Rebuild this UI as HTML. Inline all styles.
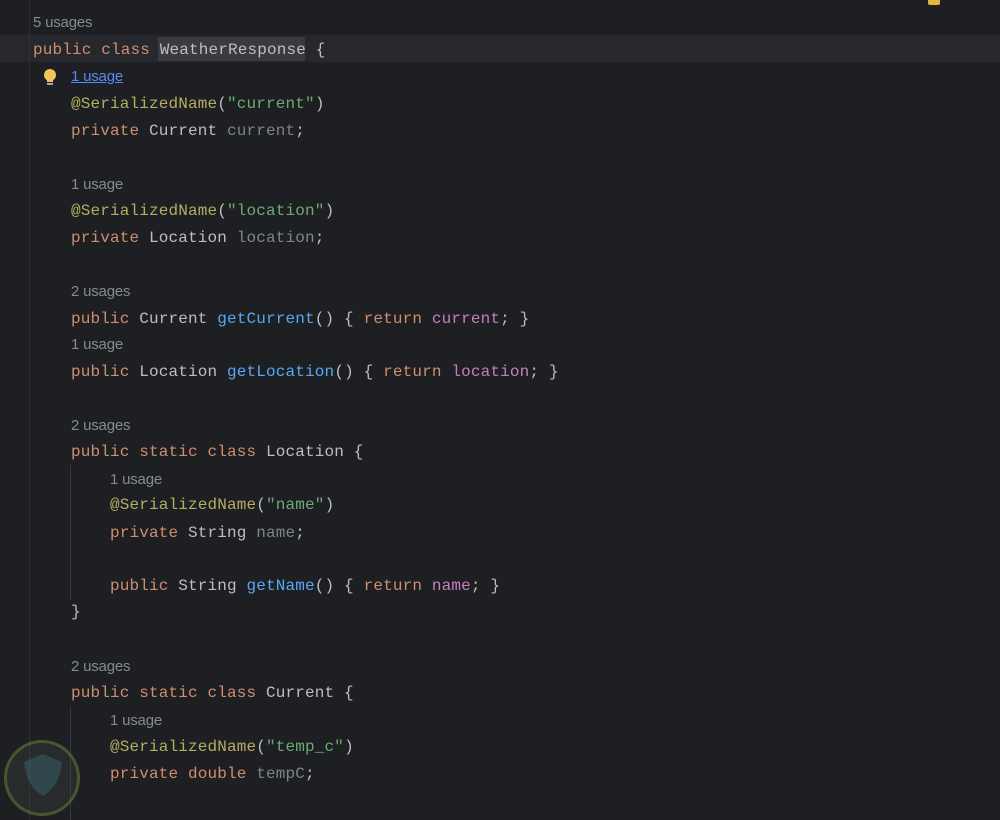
<!DOCTYPE html><html><head><style>
body{margin:0;width:1000px;height:820px;background:#1e1f22;overflow:hidden;position:relative;font-family:"Liberation Mono",monospace;}
.l{position:absolute;font-size:16px;line-height:20px;color:#bcbec4;white-space:pre;letter-spacing:0.15px;}
.u{position:absolute;font-family:"Liberation Sans",sans-serif;font-size:15px;line-height:18px;color:#868a91;white-space:pre;letter-spacing:-0.2px}
.k{color:#cf8e6d}.a{color:#b3ae60}.s{color:#6aab73}.f{color:#c77dbb}.m{color:#56a8f5}.g{color:#7f838a}
</style></head><body>
<div style="position:absolute;left:0;top:35px;width:1000px;height:27px;background:#26282e"></div>
<div style="position:absolute;left:29px;top:0;width:1px;height:820px;background:#2f3136"></div>
<div style="position:absolute;left:70px;top:465px;width:1px;height:135px;background:#35373c"></div>
<div style="position:absolute;left:70px;top:706px;width:1px;height:114px;background:#35373c"></div>
<div style="position:absolute;left:158px;top:37px;width:147px;height:24px;background:#393b40"></div>
<div style="position:absolute;left:928px;top:0;width:12px;height:5px;background:#e0b840;border-radius:0 0 2px 2px"></div>
<svg style="position:absolute;left:42px;top:68px" width="16" height="20"><circle cx="8" cy="7" r="6" fill="#f2c55c"/><rect x="5" y="12" width="6" height="2" fill="#f2c55c"/><rect x="5" y="15" width="6" height="2" fill="#aaa"/></svg>
<div class="u" style="left:33px;top:14px">5 usages</div>
<div class="l" style="left:33px;top:40px"><span class="k">public class </span>WeatherResponse {</div>
<div class="u" style="left:71px;top:68px;color:#548af7;text-decoration:underline">1 usage</div>
<div class="l" style="left:71px;top:94px"><span class="a">@SerializedName</span>(<span class="s">"current"</span>)</div>
<div class="l" style="left:71px;top:121px"><span class="k">private </span>Current <span class="g">current</span>;</div>
<div class="u" style="left:71px;top:176px">1 usage</div>
<div class="l" style="left:71px;top:201px"><span class="a">@SerializedName</span>(<span class="s">"location"</span>)</div>
<div class="l" style="left:71px;top:228px"><span class="k">private </span>Location <span class="g">location</span>;</div>
<div class="u" style="left:71px;top:283px">2 usages</div>
<div class="l" style="left:71px;top:309px"><span class="k">public </span>Current <span class="m">getCurrent</span>() { <span class="k">return </span><span class="f">current</span>; }</div>
<div class="u" style="left:71px;top:336px">1 usage</div>
<div class="l" style="left:71px;top:362px"><span class="k">public </span>Location <span class="m">getLocation</span>() { <span class="k">return </span><span class="f">location</span>; }</div>
<div class="u" style="left:71px;top:417px">2 usages</div>
<div class="l" style="left:71px;top:442px"><span class="k">public static class </span>Location {</div>
<div class="u" style="left:110px;top:471px">1 usage</div>
<div class="l" style="left:110px;top:495px"><span class="a">@SerializedName</span>(<span class="s">"name"</span>)</div>
<div class="l" style="left:110px;top:523px"><span class="k">private </span>String <span class="g">name</span>;</div>
<div class="l" style="left:110px;top:576px"><span class="k">public </span>String <span class="m">getName</span>() { <span class="k">return </span><span class="f">name</span>; }</div>
<div class="l" style="left:71px;top:602px">}</div>
<div class="u" style="left:71px;top:658px">2 usages</div>
<div class="l" style="left:71px;top:683px"><span class="k">public static class </span>Current {</div>
<div class="u" style="left:110px;top:712px">1 usage</div>
<div class="l" style="left:110px;top:737px"><span class="a">@SerializedName</span>(<span class="s">"temp_c"</span>)</div>
<div class="l" style="left:110px;top:764px"><span class="k">private double </span><span class="g">tempC</span>;</div>
<div style="position:absolute;left:4px;top:740px;width:76px;height:76px;border-radius:50%;border:3px solid rgba(110,140,60,0.45);box-sizing:border-box;background:rgba(70,80,70,0.25)"></div>
<svg style="position:absolute;left:22px;top:752px;opacity:.45" width="42" height="46"><path d="M21 2 L40 10 Q38 34 21 44 Q4 34 2 10 Z" fill="#3a6a7a"/></svg>
</body></html>
